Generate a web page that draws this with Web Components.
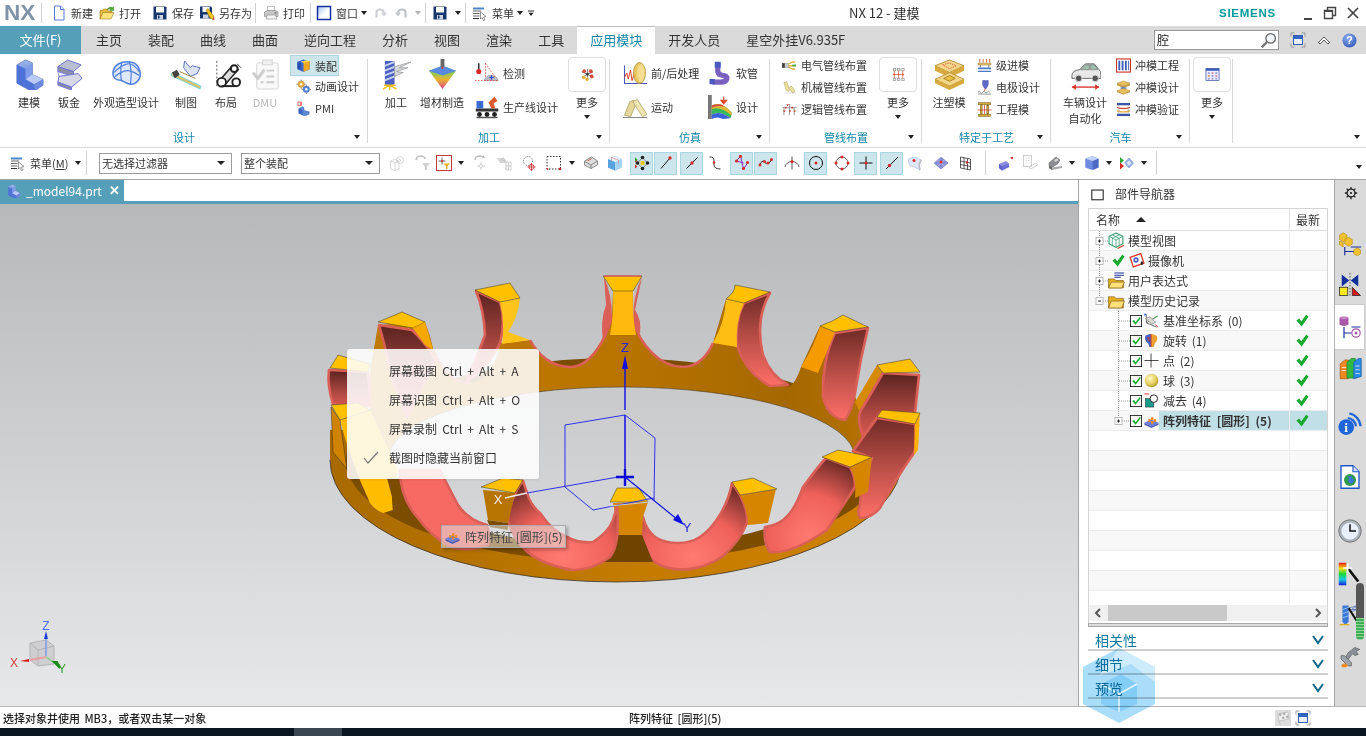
<!DOCTYPE html>
<html lang="zh">
<head>
<meta charset="utf-8">
<title>NX 12 - 建模</title>
<style>
  html, body { margin: 0; height: 100%; overflow: hidden; background: #fff; }
  body { font: 11px/16px "Noto Sans CJK SC", "Liberation Sans", sans-serif; color: #333; }
</style>
</head>
<body>
<nx-app>
  <nx-titlebar>
    <nx-tb ico="new" style="margin-left:9px">新建</nx-tb>
    <nx-tb ico="open" style="margin-left:6px">打开</nx-tb>
    <nx-tb ico="save" style="margin-left:11px">保存</nx-tb>
    <nx-tb ico="saveas" style="margin-left:5px">另存为</nx-tb>
    <nx-sep style="margin:0 7px 0 3px"></nx-sep>
    <nx-tb ico="print">打印</nx-tb>
    <nx-sep style="margin:0 5px 0 5px"></nx-sep>
    <nx-tb ico="win">窗口</nx-tb>
    <nx-caret style="margin-left:3px"></nx-caret>
    <nx-ico n="redo" s="14" style="margin-left:6px"></nx-ico>
    <nx-ico n="undo" s="14" style="margin-left:8px"></nx-ico>
    <nx-caret style="margin-left:6px;opacity:.35"></nx-caret>
    <nx-sep style="margin:0 6px 0 4px"></nx-sep>
    <nx-ico n="save" s="16"></nx-ico>
    <nx-caret style="margin-left:7px"></nx-caret>
    <nx-sep style="margin:0 6px 0 4px"></nx-sep>
    <nx-tb ico="menu">菜单</nx-tb>
    <nx-caret style="margin-left:3px"></nx-caret>
    <nx-ico n="dropline" s="8" style="margin-left:4px"></nx-ico>
  </nx-titlebar>

  <nx-tabs>
    <nx-tab>主页</nx-tab><nx-tab>装配</nx-tab><nx-tab>曲线</nx-tab><nx-tab>曲面</nx-tab><nx-tab>逆向工程</nx-tab>
    <nx-tab>分析</nx-tab><nx-tab>视图</nx-tab><nx-tab>渲染</nx-tab><nx-tab>工具</nx-tab><nx-tab active>应用模块</nx-tab>
    <nx-tab>开发人员</nx-tab><nx-tab>星空外挂V6.935F</nx-tab>
  </nx-tabs>

  <nx-ribbon>
    <rb-group label="设计" w="368" pad="8">
      <rb-big ico="model" w="42">建模</rb-big>
      <rb-big ico="sheet" w="38">钣金</rb-big>
      <rb-big ico="shape" w="76">外观造型设计</rb-big>
      <rb-big ico="draft" w="44">制图</rb-big>
      <rb-big ico="layout" w="36">布局</rb-big>
      <rb-big ico="dmu" w="42" dim>DMU</rb-big>
      <rb-col style="margin-left:4px">
        <rb-small ico="asm" hl>装配</rb-small>
        <rb-small ico="anim">动画设计</rb-small>
        <rb-small ico="pmi">PMI</rb-small>
      </rb-col>
    </rb-group>
    <rb-group label="加工" w="242" pad="8">
      <rb-big ico="cam" w="40">加工</rb-big>
      <rb-big ico="am" w="52">增材制造</rb-big>
      <rb-col tall w="93" style="margin-left:7px">
        <rb-small ico="inspect" big>检测</rb-small>
        <rb-small ico="line" big>生产线设计</rb-small>
      </rb-col>
      <rb-more ico="moremfg">更多</rb-more>
    </rb-group>
    <rb-group label="仿真" w="160" pad="13">
      <rb-col tall w="85">
        <rb-small ico="pre" big>前/后处理</rb-small>
        <rb-small ico="motion" big>运动</rb-small>
      </rb-col>
      <rb-col tall w="60">
        <rb-small ico="hose" big>软管</rb-small>
        <rb-small ico="flow" big>设计</rb-small>
      </rb-col>
    </rb-group>
    <rb-group label="管线布置" w="152" pad="6">
      <rb-col w="103">
        <rb-small ico="elec">电气管线布置</rb-small>
        <rb-small ico="mech">机械管线布置</rb-small>
        <rb-small ico="logic">逻辑管线布置</rb-small>
      </rb-col>
      <rb-more ico="morert">更多</rb-more>
    </rb-group>
    <rb-group label="特定于工艺" w="129" pad="5">
      <rb-big ico="mold" w="44">注塑模</rb-big>
      <rb-col>
        <rb-small ico="prog">级进模</rb-small>
        <rb-small ico="electrode">电极设计</rb-small>
        <rb-small ico="eng">工程模</rb-small>
      </rb-col>
    </rb-group>
    <rb-group label="汽车" w="139" pad="9">
      <rb-big ico="car" w="50">车辆设计<br>自动化</rb-big>
      <rb-col>
        <rb-small ico="die1">冲模工程</rb-small>
        <rb-small ico="die2">冲模设计</rb-small>
        <rb-small ico="die3">冲模验证</rb-small>
      </rb-col>
    </rb-group>
    <rb-group w="43" pad="3" plain>
      <rb-more ico="moreauto">更多</rb-more>
    </rb-group>
  </nx-ribbon>

  <nx-selbar>
    <nx-ico n="menu" s="16" style="margin-left:10px"></nx-ico>
    <span style="margin-left:4px;width:40px;white-space:nowrap">菜单(<u>M</u>)</span>
    <nx-caret style="margin-left:4.5px"></nx-caret>
    <nx-sep style="margin:0 12px 0 5.5px;height:24px"></nx-sep>
    <sel-drop w="133">无选择过滤器</sel-drop>
    <sel-drop w="139" style="margin-left:9px">整个装配</sel-drop>
    <sel-btn n="f1" style="margin-left:5.5px"></sel-btn>
    <sel-btn n="f2" style="margin-left:3px"></sel-btn>
    <sel-btn n="f3" style="margin-left:-2px"></sel-btn>
    <nx-caret style="margin-left:2px"></nx-caret>
    <sel-btn n="f4" style="margin-left:6px"></sel-btn>
    <sel-btn n="f5"></sel-btn>
    <sel-btn n="f6" style="margin-left:2px"></sel-btn>
    <sel-btn n="f7" style="margin-left:2px"></sel-btn>
    <nx-caret style="margin-left:3px"></nx-caret>
    <sel-btn n="f8" style="margin-left:5px"></sel-btn>
    <sel-btn n="f9" style="margin-left:1px"></sel-btn>
    <sel-btn n="s1" hl style="margin-left:3.5px"></sel-btn>
    <sel-btn n="s2" hl style="margin-left:1px"></sel-btn>
    <sel-btn n="s3" hl style="margin-left:3px"></sel-btn>
    <sel-btn n="s4" style="margin-left:.5px"></sel-btn>
    <sel-btn n="s5" hl style="margin-left:3.5px"></sel-btn>
    <sel-btn n="s6" hl style="margin-left:1px"></sel-btn>
    <sel-btn n="s7" style="margin-left:3.5px"></sel-btn>
    <sel-btn n="s8" hl style="margin-left:.5px"></sel-btn>
    <sel-btn n="s9" style="margin-left:3.5px"></sel-btn>
    <sel-btn n="s10" hl style="margin-left:.5px"></sel-btn>
    <sel-btn n="s11" hl style="margin-left:3px"></sel-btn>
    <sel-btn n="s12" style="margin-left:.5px"></sel-btn>
    <sel-btn n="s13" style="margin-left:3px"></sel-btn>
    <sel-btn n="s14" style="margin-left:2px"></sel-btn>
    <nx-sep style="margin:0 8.5px 0 7.5px;height:24px"></nx-sep>
    <sel-btn n="t1"></sel-btn>
    <sel-btn n="t2" style="margin-left:1px"></sel-btn>
    <sel-btn n="t3" style="margin-left:2px"></sel-btn>
    <nx-caret style="margin-left:2px"></nx-caret>
    <sel-btn n="t4" style="margin-left:6px"></sel-btn>
    <nx-caret style="margin-left:2px"></nx-caret>
    <sel-btn n="t5" style="margin-left:3px"></sel-btn>
    <nx-caret style="margin-left:3px"></nx-caret>
    <nx-sep style="margin:0 0 0 9.5px;height:24px"></nx-sep>
    <nx-caret style="margin-left:auto;margin-right:4px;margin-top:8px"></nx-caret>
  </nx-selbar>

  <nx-main>
    <nx-work>
      <nx-doctab>_model94.prt</nx-doctab>
      <nx-viewport>
        <nx-popup>
          <pop-item>屏幕截图 Ctrl + Alt + A</pop-item>
          <pop-item>屏幕识图 Ctrl + Alt + O</pop-item>
          <pop-item>屏幕录制 Ctrl + Alt + S</pop-item>
          <pop-item checked>截图时隐藏当前窗口</pop-item>
        </nx-popup>
        <nx-tip>阵列特征 [圆形](5)</nx-tip>
      </nx-viewport>
    </nx-work>
    <nx-panel>
      <nx-tree>
        <tree-row kind="root" exp="+" ico="tview">模型视图</tree-row>
        <tree-row kind="root" exp="+" ico="tcam" tick>摄像机</tree-row>
        <tree-row kind="root" exp="+" ico="texpr">用户表达式</tree-row>
        <tree-row kind="root" exp="-" ico="topen" endroot>模型历史记录</tree-row>
        <tree-row kind="child" ico="tdatum" ok>基准坐标系 (0)</tree-row>
        <tree-row kind="child" ico="trev" ok>旋转 (1)</tree-row>
        <tree-row kind="child" ico="tpoint" ok>点 (2)</tree-row>
        <tree-row kind="child" ico="tsphere" ok>球 (3)</tree-row>
        <tree-row kind="child" ico="tsub" ok>减去 (4)</tree-row>
        <tree-row kind="child" ico="tpat" ok sel exp="+">阵列特征 [圆形] (5)</tree-row>
        <tree-row></tree-row><tree-row></tree-row><tree-row></tree-row><tree-row></tree-row><tree-row></tree-row>
        <tree-row></tree-row><tree-row></tree-row><tree-row></tree-row><tree-row></tree-row>
      </nx-tree>
      <acc-item>相关性</acc-item>
      <acc-item>细节</acc-item>
      <acc-item>预览</acc-item>
    </nx-panel>
    <nx-rail>
      <rail-item n="gear" s="14" h="26" style="margin-left:2px"></rail-item>
      <rail-item n="r_asm" s="24" h="40" style="margin-top:18px"></rail-item>
      <rail-item n="r_con" s="24" h="40" style="margin-top:1px"></rail-item>
      <rail-item n="r_part" s="24" h="44" active></rail-item>
      <rail-item n="r_book" s="24" h="40"></rail-item>
      <rail-item n="r_info" s="24" h="40" style="margin-top:15px"></rail-item>
      <rail-item n="r_web" s="24" h="40" style="margin-top:13px"></rail-item>
      <rail-item n="r_clock" s="24" h="40" style="margin-top:14px"></rail-item>
      <rail-item n="r_role" s="24" h="40" style="margin-top:3px"></rail-item>
      <rail-item n="r_hole" s="22" h="40" style="margin-top:1px"></rail-item>
      <rail-item n="r_tool" s="22" h="40" style="margin-top:2px"></rail-item>
      <rail-pill></rail-pill>
    </nx-rail>
  </nx-main>

  <nx-status msg="选择对象并使用 MB3&#xFF0C;或者双击某一对象" sel="阵列特征 [圆形](5)"></nx-status>
  <nx-taskbar></nx-taskbar>
  <nx-mark></nx-mark>
</nx-app>

<script>
// ICONS, all on a 32x32 grid
const ICONS = {
  new: `<path d="M7 2h12l7 7v21H7z" fill="#fff" stroke="#5a78d8" stroke-width="2"/><path d="M19 2v7h7" fill="#dde5fb" stroke="#5a78d8" stroke-width="2"/>`,
  open: `<path d="M2 11h5l2-3h9v4h8v4H8L2 28z" fill="#e8b93a" stroke="#8a6a12"/><path d="M2 28l6-13h22l-6 13z" fill="#ffe27a" stroke="#8a6a12"/><path d="M16 9q5-7 11-4l2-2 1 8-8 0 2-2q-4-2-8 0z" fill="#4fae3a" stroke="#2c7a22" stroke-width=".7"/>`,
  save: `<path d="M3 3h24l2 2v24H3z" fill="#17376f"/><rect x="8" y="4" width="16" height="11" fill="#fff"/><rect x="10" y="20" width="12" height="9" fill="#c9d1e2"/><rect x="12" y="21" width="3" height="6" fill="#17376f"/>`,
  saveas: `<path d="M2 3h22l2 2v22H2z" fill="#17376f"/><rect x="7" y="4" width="14" height="10" fill="#fff"/><rect x="8" y="19" width="11" height="8" fill="#c9d1e2"/><path d="M14 10l4-3 12 16-3 6-5-3z" fill="#f4c518" stroke="#7c5c00" stroke-width=".8"/><path d="M27 29l3-6 1 7z" fill="#d23a2a"/>`,
  print: `<path d="M9 3h14v9H9z" fill="#fff" stroke="#888"/><path d="M3 14l5-3h17l5 3v9H3z" fill="#c8c8c8" stroke="#6b6b6b"/><path d="M8 20h17l3 8H6z" fill="#f2f2f2" stroke="#777"/><rect x="23" y="15" width="4" height="2" fill="#555"/>`,
  win: `<defs><linearGradient id="w" x1="0" y1="0" x2="1" y2="1"><stop offset="0" stop-color="#9cc0ee"/><stop offset=".55" stop-color="#fff"/></linearGradient></defs><rect x="3" y="3" width="26" height="26" fill="url(#w)" stroke="#1a2fa0" stroke-width="3"/>`,
  redo: `<path d="M8 26V15q0-7 8-7t9 7" fill="none" stroke="#ccd0d4" stroke-width="5"/><path d="M18 15h14l-7 9z" fill="#ccd0d4"/>`,
  undo: `<path d="M24 26V15q0-7-8-7t-9 7" fill="none" stroke="#c0c4c8" stroke-width="5"/><path d="M14 15H0l7 9z" fill="#c0c4c8"/>`,
  menu: `<path d="M2 5h22v4H2z" fill="#4d86c6"/><path d="M2 12h16M2 17h13M2 22h13" stroke="#666" stroke-width="2.4"/><path d="M2 27h12" stroke="#333" stroke-width="2"/><path d="M17 14l11 9-5 1 3 6-3 1-3-6-3 3z" fill="#fff" stroke="#333"/>`,
  dropline: `<path d="M4 8h24" stroke="#222" stroke-width="4"/><path d="M6 15h20L16 28z" fill="#222"/>`,
  // ribbon, large
  model: `<defs><linearGradient id="m" x1="0" y1="0" x2="0" y2="1"><stop offset="0" stop-color="#9db6ee"/><stop offset="1" stop-color="#3f5fc8"/></linearGradient></defs><path d="M3 6l9-5 7 3v12l11 5v6l-11 7L3 25z" fill="url(#m)" stroke="#8090c0"/><path d="M3 6l9 4v11l9 5v8L3 25z" fill="#4e73d8"/><path d="M12 10l7-6v12l-7 5z" fill="#7f9cec"/><path d="M12 21l7-5 11 5-9 5z" fill="#b9cbf6"/><path d="M21 26l9-5v6l-9 7z" fill="#6c8be0"/>`,
  sheet: `<path d="M4 8l10-7 14 5-8 7z" fill="#b9bed0" stroke="#6d6fd8"/><path d="M4 8l16 5v5L4 13z" fill="#8c90a6" stroke="#6d6fd8"/><path d="M4 13l16 5-8 2L5 18z" fill="#eceef6" stroke="#6d6fd8" stroke-width=".7"/><path d="M5 18l20-3 4 5-11 9-14-5z" fill="#d6d8e6" stroke="#6d6fd8"/><path d="M4 24l14 5v3L4 27z" fill="#8a8ea4" stroke="#6d6fd8"/>`,
  shape: `<path d="M2 15C2 5 12 2 20 3c8 1 11 9 10 15-1 6-6 8-9 8-5 0-7-3-11-4-4 0-8-2-8-7z" fill="#dfe8fb" stroke="#4d7fe0" stroke-width="1.6"/><path d="M3 14q8-8 14-9t12 8M4 18q8-6 13-6t12 5M11 4q-2 9 0 19M19 3q3 11 1 23" fill="none" stroke="#4d7fe0" stroke-width="1.2"/>`,
  draft: `<path d="M14 2l6 7 2-2 8 2-3 6-7 3-7-9z" fill="#dde4f6" stroke="#5c6fb8"/><path d="M1 14l30 14-1 3L0 17z" fill="#d9c36a" stroke="#7cd3d8"/><path d="M1 14l5-3 3 5-5 4z" fill="#444"/><path d="M9 13l16 7" stroke="#9a8a3a"/>`,
  layout: `<path d="M6 2v28" stroke="#555" stroke-dasharray="2 2"/><path d="M9 22L22 7l6 4-14 16z" fill="#ddd" stroke="#222" stroke-width="1.6"/><circle cx="11" cy="24" r="4.5" fill="#fff" stroke="#222" stroke-width="2"/><circle cx="24" cy="10" r="3.5" fill="#fff" stroke="#222" stroke-width="2"/><path d="M11 28h16" stroke="#222" stroke-width="2"/><circle cx="26" cy="24" r="4" fill="#fff" stroke="#222" stroke-width="2"/><path d="M27 5l4 4" stroke="#222"/>`,
  dmu: `<g opacity=".42"><rect x="7" y="4" width="22" height="27" rx="2" fill="#f1f1f1" stroke="#999"/><rect x="13" y="1" width="10" height="5" fill="#ddd" stroke="#999"/><path d="M3 14l5 6 7-9" fill="none" stroke="#8a8a8a" stroke-width="3"/><path d="M17 12h8M17 18h8M17 24h8M11 24h3" stroke="#888" stroke-width="2"/></g>`,
  cam: `<path d="M4 2h10v24l-5 3-5-3z" fill="#4a5fc0"/><path d="M4 7l10-4M4 12l10-4M4 17l10-4M4 22l10-4" stroke="#c5d2f2" stroke-width="2"/><path d="M14 8l17-5-12 6 9 0-12 4 7 1-9 4z" fill="#d6d8dc" stroke="#888" stroke-width=".6"/><path d="M9 27l-7 4M9 27l7 4M9 27v5M3 27h12" stroke="#f0c020" stroke-width="1.5"/>`,
  am: `<defs><linearGradient id="a" x1="0" y1="0" x2="0" y2="1"><stop offset="0" stop-color="#36b0c8"/><stop offset=".35" stop-color="#9ac850"/><stop offset=".6" stop-color="#f0b030"/><stop offset="1" stop-color="#d04090"/></linearGradient></defs><path d="M2 12L16 31 30 12 16 7z" fill="url(#a)"/><path d="M2 12l14-5 14 5-14 5z" fill="#5a8ae0"/><rect x="14" y="0" width="4" height="8" fill="#666"/><path d="M16 8v2" stroke="#d33" stroke-width="2"/>`,
  inspect: `<path d="M12 26a10 10 0 0 1 19 0z" fill="#b8bbc0" stroke="#7a7d82" stroke-width=".6"/><path d="M0 26h32" stroke="#d33" stroke-dasharray="2 2"/><path d="M5 3v10" stroke="#333" stroke-width="2"/><circle cx="5" cy="14" r="3.4" fill="#d82a2a"/><path d="M14 3l13 19M14 3v19" stroke="#d33" stroke-dasharray="2 2"/><path d="M19 22h6M22 19v6" stroke="#2c44d8" stroke-width="1.5"/>`,
  line: `<rect x="1" y="18" width="30" height="4" fill="#333"/><rect x="2" y="8" width="9" height="10" fill="#3c6bd0"/><path d="M22 18l-4-8 8-8 4 6-5 3 2 7z" fill="#d85a2a"/><circle cx="6" cy="26" r="3.2" fill="#222"/><circle cx="16" cy="26" r="3.2" fill="#222"/><circle cx="26" cy="26" r="3.2" fill="#222"/><path d="M2 30h28" stroke="#555" stroke-width="2"/>`,
  moremfg: `<path d="M16 4v24M4 10l24 12M28 10L4 22" stroke="#333" stroke-width="1.3"/><circle cx="9" cy="9" r="4" fill="#d84a3a"/><circle cx="23" cy="9" r="4" fill="#d84a3a"/><circle cx="25" cy="20" r="4" fill="#d84a3a"/><circle cx="8" cy="22" r="4" fill="#e8b040"/><circle cx="15" cy="26" r="3.6" fill="#e8b040"/><circle cx="16" cy="15" r="3" fill="#333"/>`,
  pre: `<path d="M2 6v24h30" fill="none" stroke="#4a56b8" stroke-width="1.4"/><path d="M2 22l3-6 2 8 3-12 2 14 3-9 2 7" fill="none" stroke="#d8402a" stroke-width="1.3"/><ellipse cx="22" cy="16" rx="8" ry="14" fill="#e8c860" stroke="#a8883a"/><ellipse cx="24" cy="16" rx="5" ry="12" fill="#f4dd90"/>`,
  motion: `<path d="M2 27l7-18 5-2 4 3L10 29z" fill="#e4d79a" stroke="#a89a5a"/><path d="M13 9l6-3 13 20-6 3z" fill="#efe5b2" stroke="#a89a5a"/><path d="M0 30h32" stroke="#888" stroke-width="1.4"/>`,
  hose: `<path d="M13 3v10q0 5 6 6 7 0 6 5-1 4-8 4H6" fill="none" stroke="#7a60c0" stroke-width="7"/><rect x="9" y="1" width="8" height="8" fill="#4a5ac0"/><rect x="2" y="24" width="7" height="7" fill="#4a5ac0"/>`,
  flow: `<rect x="0" y="0" width="5" height="32" fill="#777"/><path d="M5 14q14-6 27 10l-2 7Q16 20 5 26z" fill="#38b85a"/><path d="M5 14q14-6 27 10l-1 3Q16 14 5 19z" fill="#e0b83a"/><path d="M5 26q11-6 25 5l-10 1Q12 28 5 32z" fill="#3a62d8"/><path d="M5 14q8-3 14-1l3 3Q12 13 5 17z" fill="#d84a3a"/><path d="M21 2v7M17 7l4 5 4-5z" fill="#e04a2a" stroke="#e04a2a" stroke-width="1.4"/>`,
  elec: `<rect x="0" y="11" width="14" height="10" fill="#444"/><rect x="6" y="11" width="8" height="10" fill="#ccc"/><path d="M14 11l8-4h6v3h-6l-8 4zM14 15h14v3H14zM14 18l8 4h6v3h-6l-8-4z" fill="#e0b040"/><path d="M22 14h8v4h-8z" fill="#48a848"/>`,
  mech: `<path d="M4 6l6-3 5 15 3-5 4 2 6 9-5 4-6-8-3 5-5-3z" fill="#ecdfa2" stroke="#a8984e"/><path d="M4 28h26" stroke="#bbb"/>`,
  logic: `<path d="M1 12h30M16 4v8M4 12v16M16 12v16M26 12v16" stroke="#555" stroke-width="1.2"/><path d="M9 5l3 4 3-4zM2 18l3 4 3-4zM14 18l3 4 3-4zM24 18l3 4 3-4z" fill="#c8342a"/><circle cx="8" cy="12" r="2" fill="#c8342a"/><circle cx="22" cy="12" r="2" fill="#c8342a"/>`,
  morert: `<g fill="none" stroke="#999" stroke-width="1.6"><rect x="5" y="3" width="5" height="5"/><rect x="14" y="3" width="5" height="5"/><rect x="23" y="3" width="5" height="5"/><rect x="5" y="24" width="5" height="5"/><rect x="14" y="24" width="5" height="5"/><rect x="23" y="24" width="5" height="5"/></g><path d="M7 8v16M16 8v16M25 8v16M4 16h24" stroke="#d8503a" stroke-width="1.4"/><circle cx="7" cy="16" r="2" fill="#d8503a"/><circle cx="16" cy="16" r="2" fill="#d8503a"/><circle cx="25" cy="16" r="2" fill="#d8503a"/>`,
  mold: `<path d="M1 7L16 1l15 6-15 7z" fill="#f4d68a" stroke="#b89438"/><path d="M1 7v5l15 7 15-7V7L16 14z" fill="#d8a93c"/><path d="M9 6l7-2 7 3-7 3z" fill="none" stroke="#d8604a" stroke-dasharray="1.5 1"/><path d="M1 21l15-7 15 7-15 7z" fill="#f4d68a" stroke="#b89438"/><path d="M1 21v4l15 7 15-7v-4l-15 7z" fill="#d8a93c"/><path d="M10 20l6-3 6 3-6 3z" fill="#e8c040" stroke="#a88428"/>`,
  prog: `<path d="M6 2v8M13 2v8M20 2v8M27 2v8" stroke="#d8603a" stroke-width="2"/><path d="M2 11h28v4H2z" fill="#e8c060" stroke="#8a7a3a"/><path d="M2 20h28v4H2zM2 27h28v3H2z" fill="#4a78c8"/><path d="M7 15v5M25 15v5" stroke="#666" stroke-width="2"/>`,
  electrode: `<path d="M12 1h12v9l-4 8h-4l-4-8z" fill="#6068c8" stroke="#404a98"/><path d="M18 18l-2 5" stroke="#d84a2a" stroke-width="2"/><path d="M2 26q3-4 5 0t5 0 5 0 5 0 5 0M2 30h28" fill="none" stroke="#777" stroke-width="1.6"/>`,
  eng: `<rect x="3" y="1" width="26" height="5" fill="#d8a93c" stroke="#6b5a1e"/><rect x="3" y="26" width="26" height="5" fill="#d8a93c" stroke="#6b5a1e"/><rect x="7" y="6" width="4" height="20" fill="#c8a040" stroke="#6b5a1e"/><rect x="21" y="6" width="4" height="20" fill="#c8a040" stroke="#6b5a1e"/><path d="M1 17h30M16 6v20" stroke="#d8342a" stroke-width="1.6"/>`,
  car: `<path d="M2 17q0-5 8-6l6-6h9l5 6q2 1 2 6v3H2z" fill="#e8e8e8" stroke="#666"/><path d="M11 11l5-5h4v5zM21 6h4l4 5h-8z" fill="#9fbfb0" stroke="#666" stroke-width=".6"/><circle cx="9" cy="20" r="3.4" fill="#555" stroke="#ddd"/><circle cx="26" cy="20" r="3.4" fill="#555" stroke="#ddd"/><path d="M2 29h28" stroke="#d8342a" stroke-width="1.4"/><path d="M6 26l-4 3 4 3zM26 26l4 3-4 3z" fill="#d8342a"/>`,
  die1: `<rect x="1" y="2" width="30" height="28" fill="#fff" stroke="#c8342a" stroke-width="2.4"/><path d="M5 6h4v20H5zM12 6h4v20h-4zM19 6h4v20h-4z" fill="#3f5fb8"/><path d="M26 6h2v20h-2z" fill="#3f5fb8"/>`,
  die2: `<path d="M2 7l14-5 14 5-14 6z" fill="#e8c060" stroke="#a88428"/><path d="M2 7v4l14 6 14-6V7l-14 6z" fill="#c89a3a"/><path d="M8 17l8-3 8 3-8 4z" fill="#6a86c8"/><path d="M2 23l14-5 14 5-14 7z" fill="#e8c060" stroke="#a88428"/><path d="M2 23v3l14 5 14-5v-3l-14 7z" fill="#c89a3a"/>`,
  die3: `<rect x="2" y="2" width="28" height="5" fill="#3a54a8"/><rect x="2" y="25" width="28" height="5" fill="#3a54a8"/><path d="M2 10q14 5 28 0v3q-14 5-28 0z" fill="#d84a3a"/><path d="M2 17q14 5 28 0v3q-14 5-28 0z" fill="#e8b040"/><path d="M6 7v18M26 7v18" stroke="#888"/>`,
  moreauto: `<rect x="2" y="3" width="28" height="26" fill="#eef" stroke="#4a5aa8" stroke-width="1.6"/><rect x="2" y="3" width="28" height="5" fill="#3a5ab8"/><g fill="#a0a0d8"><rect x="6" y="11" width="4" height="4"/><rect x="14" y="11" width="4" height="4" fill="#d88aa0"/><rect x="22" y="11" width="4" height="4"/><rect x="6" y="17" width="4" height="4" fill="#d8a070"/><rect x="14" y="17" width="4" height="4"/><rect x="22" y="17" width="4" height="4" fill="#d88aa0"/><rect x="6" y="23" width="4" height="4"/><rect x="14" y="23" width="4" height="4"/><rect x="22" y="23" width="4" height="4"/></g>`,
  // ribbon, small
  asm: `<path d="M3 8l13-5 13 5v16l-13 6-13-6z" fill="#3a66d0"/><path d="M16 9l13-3v18l-13 6z" fill="#f2a81e"/><path d="M10 8l12-3 7 2-12 4z" fill="#ffd050"/><path d="M3 8l7 3v15l-7-3z" fill="#2a4ea8"/>`,
  anim: `<circle cx="11" cy="11" r="7" fill="#e8b040" stroke="#a87820"/><circle cx="11" cy="11" r="2.6" fill="#fff"/><circle cx="22" cy="22" r="7" fill="#5a86d8" stroke="#3a5ab0"/><circle cx="22" cy="22" r="2.6" fill="#fff"/><path d="M11 1v3M11 18v3M1 11h3M18 11h3M22 12v3M22 29v3M12 22h3M29 22h3" stroke="#888" stroke-width="2"/>`,
  pmi: `<path d="M6 16l8-4 3 2v6l11 3v5l-10 4-12-6z" fill="#5a8ad8" stroke="#3a5fb0"/><path d="M6 16l8 4v10l-8-4z" fill="#3a66c0"/><path d="M4 2h6v8H4z" fill="none" stroke="#d8342a" stroke-width="1.5"/><path d="M12 2v8" stroke="#d8342a" stroke-width="1.5"/>`,
  search: `<circle cx="20" cy="12" r="9" fill="#f3f6f8" stroke="#666" stroke-width="2.4"/><path d="M13 19L3 29" stroke="#777" stroke-width="4.5"/>`,
  maximize: `<path d="M2 9V2h7M23 2h7v7M30 23v7h-7M9 30H2v-7" fill="none" stroke="#888" stroke-width="1.6"/><rect x="7" y="7" width="18" height="18" fill="#eaf0fa" stroke="#1f4fa8" stroke-width="1.8"/><rect x="8" y="8" width="16" height="6" fill="#2f66c4"/>`,
  up: `<path d="M3 22L16 9l13 13-4 3-9-9-9 9z" fill="#fff" stroke="#333" stroke-width="1.8"/>`,
  help: `<defs><radialGradient id="h" cx=".4" cy=".3" r=".8"><stop offset="0" stop-color="#8fb0f0"/><stop offset="1" stop-color="#2c54b8"/></radialGradient></defs><circle cx="16" cy="16" r="15" fill="url(#h)"/><text x="16" y="24" text-anchor="middle" font-size="23" font-weight="700" fill="#fff" font-family="Liberation Sans">?</text>`,
  // selection bar
  f1: `<g opacity=".5" fill="none" stroke="#666"><path d="M3 12v16l9 3V15zM12 15l8-3v16l-8 3M3 12l8-3 9 3"/><circle cx="22" cy="10" r="7"/><path d="M19 6l6 8"/></g>`,
  f2: `<g opacity=".45"><path d="M14 16h16l-6 7v7h-4v-7z" fill="#999"/><path d="M2 10q1-8 9-8t9 6" fill="none" stroke="#777" stroke-width="3"/><path d="M2 10l4-2M20 8l3-4" stroke="#777"/></g>`,
  f3: `<rect x="1" y="1" width="30" height="30" fill="#fff" stroke="#c03a3a" stroke-width="2"/><path d="M12 5v14M5 12h14" stroke="#333" stroke-width="1.5"/><circle cx="12" cy="12" r="2" fill="#d82a2a"/><path d="M15 17h13l-5 5v6h-3v-6z" fill="#e8a820"/>`,
  f4: `<g opacity=".5"><path d="M4 10q0-8 10-8l6 2" fill="none" stroke="#777" stroke-width="2.6"/><path d="M20 0l4 5-6 2z" fill="#777"/><path d="M16 14v16M8 22h16" stroke="#888" stroke-width="1.6"/><circle cx="16" cy="22" r="3" fill="#fff" stroke="#777"/></g>`,
  f5: `<g opacity=".5"><path d="M2 6h14l4 4v6H8z" fill="#aaa"/><path d="M16 4l-5 5 8 3" stroke="#777" fill="none"/><path d="M20 14h10v16H20zM20 22h10M25 14v16" fill="none" stroke="#777" stroke-width="1.4"/></g>`,
  f6: `<circle cx="14" cy="12" r="9" fill="none" stroke="#555" stroke-width="1.6" stroke-dasharray="2 2"/><path d="M21 16v16M13 24h16" stroke="#c82a2a" stroke-width="1.6"/><circle cx="21" cy="24" r="5" fill="none" stroke="#c82a2a" stroke-width="1.6"/>`,
  f7: `<rect x="2" y="3" width="27" height="25" fill="none" stroke="#333" stroke-width="2" stroke-dasharray="3 3"/><circle cx="28" cy="28" r="2.6" fill="#c82a2a"/><circle cx="3" cy="28" r="2" fill="#c82a2a"/>`,
  f8: `<path d="M3 12L17 4l12 8v8l-13 7-13-7z" fill="#ddd" stroke="#666" stroke-width="1.4"/><path d="M3 13l13 7 13-8M16 20v7" fill="none" stroke="#666" stroke-width="1.4"/><path d="M9 12l8-5" stroke="#d8503a" stroke-width="2"/>`,
  f9: `<path d="M2 8l14-6 14 6v17l-14 6-14-6z" fill="#8cc0ec"/><path d="M2 8l14 6v17l-14-6z" fill="#58a2e0"/><path d="M16 14l14-6v17l-14 6z" fill="#a8d4f4"/><path d="M2 8l14-6 14 6-14 6z" fill="#e4f0fa"/><path d="M9 12V5l14 5v8" fill="none" stroke="#d86a6a"/>`,
  s1: `<path d="M2 7l5 4-5 4zM2 19l5 4-5 4z" fill="#d82a2a"/><path d="M2 5l5 4-5 4z" fill="#28a828"/><circle cx="17" cy="16" r="4.5" fill="#e8c820"/><circle cx="17" cy="5" r="3.6" fill="#222"/><circle cx="17" cy="27" r="3.6" fill="#222"/><circle cx="7" cy="16" r="3.6" fill="#222"/><circle cx="27" cy="16" r="3.6" fill="#222"/><path d="M17 5L7 16l10 11 10-11z" fill="none" stroke="#222"/>`,
  s2: `<path d="M6 27L24 6" stroke="#111" stroke-width="2"/><circle cx="24" cy="6" r="3.4" fill="#d82a2a"/>`,
  s3: `<path d="M5 27L27 5" stroke="#111" stroke-width="2"/><circle cx="16" cy="16" r="3.4" fill="#d82a2a"/>`,
  s4: `<path d="M5 4q9-1 9 7v9q0 8 13 8" fill="none" stroke="#222" stroke-width="1.8"/><circle cx="14" cy="15" r="2.4" fill="#d82a2a"/>`,
  s5: `<path d="M5 12L13 2l6 26 8-12M5 12l14 4" fill="none" stroke="#8a2ab8" stroke-width="2"/><circle cx="5" cy="12" r="3.2" fill="#d82a2a"/><circle cx="13" cy="3" r="3.2" fill="#d82a2a"/><circle cx="19" cy="27" r="3.2" fill="#d82a2a"/><circle cx="27" cy="15" r="3.2" fill="#d82a2a"/>`,
  s6: `<path d="M3 20q5-12 11-5t14-7" fill="none" stroke="#222" stroke-width="2"/><circle cx="4" cy="20" r="3" fill="#d82a2a"/><circle cx="13" cy="13" r="3" fill="#d82a2a"/><circle cx="20" cy="16" r="3" fill="#d82a2a"/><circle cx="27" cy="9" r="3" fill="#d82a2a"/>`,
  s7: `<path d="M16 3v26" stroke="#222" stroke-width="1.5"/><path d="M2 24q3-11 14-11t14 11" fill="none" stroke="#222" stroke-width="1.5"/><circle cx="16" cy="13" r="3" fill="#d82a2a"/>`,
  s8: `<circle cx="16" cy="16" r="13" fill="none" stroke="#111" stroke-width="2"/><circle cx="16" cy="16" r="3" fill="#d82a2a"/>`,
  s9: `<circle cx="16" cy="16" r="12" fill="none" stroke="#444" stroke-width="1.6"/><g fill="#d82a2a"><circle cx="16" cy="4" r="3"/><circle cx="16" cy="28" r="3"/><circle cx="4" cy="16" r="3"/><circle cx="28" cy="16" r="3"/></g>`,
  s10: `<path d="M16 3v26M3 16h26" stroke="#111" stroke-width="2"/><circle cx="16" cy="16" r="3" fill="#d82a2a"/>`,
  s11: `<path d="M4 28L28 4" stroke="#111" stroke-width="2"/><circle cx="11" cy="21" r="3.4" fill="#d82a2a"/>`,
  s12: `<path d="M3 8q12-8 26 2-6 8-3 20Q14 22 6 22q-4-6-3-14z" fill="#dbe8fb" stroke="#a0b0d8"/><path d="M26 30q-4-14 3-20" fill="none" stroke="#bbb" stroke-width="3"/><circle cx="14" cy="11" r="3" fill="#d82a2a"/>`,
  s13: `<path d="M2 16L16 4l14 12-14 12z" fill="#8a90d8" stroke="#5a60b0"/><path d="M9 10l14 12M16 4L2 16M23 10L9 22" stroke="#dfe0f4"/><circle cx="16" cy="14" r="3" fill="#d82a2a"/>`,
  s14: `<path d="M5 4l20 4v22L5 26z" fill="#fff" stroke="#333" stroke-width="1.6"/><path d="M12 5v22M19 7v22M5 12l20 4M5 19l20 4" stroke="#333" stroke-width="1.6"/><circle cx="18" cy="15" r="2.4" fill="#d82a2a"/>`,
  t1: `<path d="M2 18l14-6 6 5v7l-14 7-6-5z" fill="#8a8ee0"/><path d="M2 18l6 5v8l-6-5z" fill="#5c60c8"/><path d="M8 23l14-6v7L8 31z" fill="#6a70d4"/><circle cx="28" cy="6" r="2.4" fill="#d83a3a"/><path d="M24 4l4 4" stroke="#d83a3a"/>`,
  t2: `<g opacity=".5" fill="none" stroke="#888" stroke-width="1.6"><rect x="3" y="1" width="16" height="22"/><path d="M7 6h2M12 6h3M7 11h2M12 11h3M7 16h2"/><path d="M14 24l14-8 3 4-14 8z"/></g>`,
  t3: `<path d="M4 16L18 4l8 6-4 7-12 8-6-4z" fill="#8c8f94" stroke="#555"/><path d="M4 21l6 4v5l-6-4z" fill="#666"/><path d="M10 25l20-3v4l-20 4z" fill="#aaa"/><path d="M14 10l6-3 3 3-6 4z" fill="#ddd"/>`,
  t4: `<path d="M3 7l14-5 12 5v18l-12 5-14-5z" fill="#7f9de8"/><path d="M3 7l14 5v18L3 25z" fill="#6e8ce0"/><path d="M17 12l12-5v18l-12 5z" fill="#4a68c4"/><path d="M3 7l14-5 12 5-12 5z" fill="#c2d2f6"/>`,
  t5: `<path d="M4 4l8 7-8 7z" fill="#2ea83a"/><path d="M4 15l8 7-8 7z" fill="#d82a2a"/><path d="M13 16l9-10 9 10-9 10z" fill="#9ab0e8" stroke="#6a80c0"/><path d="M17 16l5-5 5 5-5 5z" fill="#dfe6f6"/>`,
  // navigator
  frame: `<rect x="2" y="5" width="28" height="24" fill="#fff" stroke="#222" stroke-width="2.6"/>`,
  tview: `<path d="M15 2l13 6v14l-13 7-13-7V8z" fill="none" stroke="#2a9a6a" stroke-width="2"/><path d="M2 8l13 7 13-7M15 15v14M8 5l13 7v14M22 5L8 12v14" fill="none" stroke="#2a9a6a" stroke-width="1.4"/><path d="M18 31l12-6" stroke="#d8402a" stroke-width="2.4"/>`,
  tcam: `<path d="M4 10L24 3l6 18-20 7z" fill="#fff" stroke="#d8342a" stroke-width="2.4"/><circle cx="15" cy="15" r="5" fill="#4a5ac0"/><circle cx="15" cy="15" r="2" fill="#fff"/><path d="M24 18h4v6h-4z" fill="#222"/>`,
  texpr: `<path d="M12 2h18M12 6h18M12 10h12" stroke="#1f2f98" stroke-width="2"/><path d="M1 13h11l3 3h14v14H1z" fill="#e8b020" stroke="#7a5a10" stroke-width="1.2"/><path d="M1 30l5-11h25l-5 11z" fill="#ffdf7a" stroke="#7a5a10" stroke-width="1.2"/>`,
  topen: `<path d="M1 9h11l3 3h14v18H1z" fill="#e8b020" stroke="#7a5a10" stroke-width="1.2"/><path d="M1 30l5-13h25l-5 13z" fill="#ffdf7a" stroke="#7a5a10" stroke-width="1.2"/>`,
  tdatum: `<path d="M5 3v18L27 30M5 21l22-13" fill="none" stroke="#333" stroke-width="1.5"/><path d="M3 12l14 12 8-4-12-12z" fill="#d8d8d0" stroke="#555"/><path d="M2 1v6M1 3h4" stroke="#2a44d8" stroke-width="1.6"/><path d="M24 25l6 5" stroke="#d83a2a" stroke-width="2"/><path d="M22 10l8-4" stroke="#38a838" stroke-width="2"/>`,
  trev: `<path d="M3 6q12-8 24 0 4 10-4 16l-2 8h-9l-3-8Q0 16 3 6z" fill="#f0a030"/><path d="M3 6q6-4 12-4v28h-3l-3-8Q0 16 3 6z" fill="#3a66d0"/><path d="M15 2v28" stroke="#d8342a" stroke-width="2"/><path d="M6 8l6 0v10H8z" fill="#c8342a" opacity=".6"/>`,
  tpoint: `<path d="M15 1v30M1 16h30" stroke="#111" stroke-width="1.6"/>`,
  tsphere: `<defs><radialGradient id="sp" cx=".4" cy=".35" r=".7"><stop offset="0" stop-color="#fff8c8"/><stop offset=".6" stop-color="#e8d060"/><stop offset="1" stop-color="#a89020"/></radialGradient></defs><circle cx="16" cy="16" r="14.5" fill="url(#sp)"/>`,
  tsub: `<rect x="3" y="12" width="18" height="18" fill="#1a9a8a" stroke="#222"/><circle cx="21" cy="12" r="8" fill="#fff" stroke="#222" stroke-width="2"/><path d="M1 2h10" stroke="#d82a2a" stroke-width="2"/>`,
  tpat: `<path d="M1 21L15 14l16 7-15 8z" fill="#6a7ed8"/><path d="M1 21l15 8v3L1 25zM16 29l15-8v4l-15 7z" fill="#4a5cb8"/><g fill="#f08a20"><rect x="9" y="13" width="5" height="6"/><rect x="15" y="9" width="5" height="6"/><rect x="21" y="13" width="5" height="6"/><rect x="15" y="17" width="5" height="6"/></g>`,
  check: `<path d="M1 16l7-5 5 7L25 2l6 4-17 25z" fill="#19a830"/>`,
  box: `<rect x="1" y="1" width="30" height="30" fill="#fff" stroke="#111" stroke-width="2.4"/><path d="M6 16l5-3 4 6 11-14 3 3-14 18z" fill="#19a830"/>`,
  // rail
  gear: `<circle cx="16" cy="16" r="9" fill="none" stroke="#222" stroke-width="3"/><circle cx="16" cy="16" r="2.5" fill="#222"/><path d="M16 2v5M16 25v5M2 16h5M25 16h5M6 6l3.5 3.5M22.5 22.5L26 26M26 6l-3.5 3.5M9.5 22.5L6 26" stroke="#222" stroke-width="3"/>`,
  r_asm: `<g fill="#f0c030" stroke="#b88a10" stroke-width=".8"><path d="M2 4l5-3 5 3v6l-5 3-5-3z"/><path d="M9 10l5-3 5 3v6l-5 3-5-3z"/><path d="M2 12l5 2v6l-5-3z"/><path d="M21 24l5-3 4 3v5l-4 3-5-3z"/></g><path d="M17 20h14M9 20v11M9 26h12" stroke="#1a2fa0" stroke-width="1.6" fill="none"/>`,
  r_con: `<path d="M5 2l10 8-10 8zM27 2L17 10l10 8z" fill="#12309a"/><path d="M16 0v32" stroke="#222" stroke-dasharray="2 2"/><rect x="2" y="19" width="11" height="11" fill="#f8e820" stroke="#222"/><path d="M19 19l11 11H19z" fill="#d81a1a" stroke="#222"/>`,
  r_part: `<ellipse cx="8" cy="4" rx="6" ry="2.5" fill="#c888c8"/><path d="M2 4v9q6 3 12 0V4q-6 3-12 0z" fill="#a858a8"/><path d="M18 16h12M8 16v15M8 24h10" stroke="#1a2fa0" stroke-width="1.6" fill="none"/><circle cx="24" cy="24" r="5.6" fill="#fff" stroke="#a858a8" stroke-width="1.6"/><circle cx="24" cy="24" r="2" fill="#a858a8"/>`,
  r_book: `<path d="M3 9l6-5h5v25H3z" fill="#f08a20" stroke="#a85a10"/><path d="M12 7l6-5h5v26H12z" fill="#30b840" stroke="#1a8028"/><path d="M21 7l6-5h4v24l-10 3z" fill="#2a8ae0" stroke="#1a60a8"/><path d="M5 14h6M5 18h6M23 12h6M23 17h6M23 22h6" stroke="#fff" stroke-width=".9"/>`,
  r_info: `<circle cx="11" cy="20" r="10.5" fill="#1f66d8"/><text x="11" y="27" text-anchor="middle" font-size="18" font-weight="700" fill="#fff" font-family="Liberation Serif">i</text><path d="M13 8a12 12 0 0 1 11 11M15 2a18 18 0 0 1 15 17" fill="none" stroke="#1f66d8" stroke-width="3"/>`,
  r_web: `<path d="M4 1h16l8 8v22H4z" fill="#fff" stroke="#1f56c8" stroke-width="1.8"/><path d="M20 1v8h8" fill="#cfe0fa" stroke="#1f56c8" stroke-width="1.5"/><circle cx="16" cy="20" r="8" fill="#2f9a4a"/><path d="M12 15q4 2 2 5t4 5q3-2 4-5-4-2-3-5z" fill="#3a78d8"/>`,
  r_clock: `<circle cx="16" cy="16" r="15" fill="#aab0b8" stroke="#666"/><circle cx="16" cy="16" r="11.5" fill="#e8eefa"/><path d="M16 7v9h8" fill="none" stroke="#111" stroke-width="2"/>`,
  r_role: `<defs><linearGradient id="rb" x1="0" y1="0" x2="0" y2="1"><stop offset="0" stop-color="#e81818"/><stop offset=".25" stop-color="#f8e018"/><stop offset=".5" stop-color="#18d838"/><stop offset=".75" stop-color="#18c8e8"/><stop offset="1" stop-color="#1818d8"/></linearGradient></defs><rect x="1" y="1" width="10" height="30" fill="url(#rb)"/><path d="M13 8l14 18" stroke="#111" stroke-width="3.6"/><path d="M13 2v12M7 8h12" stroke="#fff" stroke-width="2"/>`,
  r_hole: `<path d="M5 2h9v24l-5 4-4-4z" fill="#3a78d8"/><path d="M5 8l9-3M5 14l9-3M5 20l9-3" stroke="#c0d8f8"/><path d="M14 6l14-4-10 6 8 0-10 4" fill="none" stroke="#3a60c0"/><path d="M14 6l14 22" stroke="#111" stroke-width="3"/><path d="M1 30h14" stroke="#e0b020" stroke-width="2"/>`,
  r_tool: `<path d="M13 10l10-8 7 3-5 3 3 4-5 2-3-3-8 10-3-3z" fill="#8a8f98" stroke="#444" stroke-width=".8"/><path d="M3 14l5 0 10 10 0 5-5 0L3 19z" fill="#a0a4ac" stroke="#444" stroke-width=".8"/><path d="M3 28q5-5 10 0l-3 3H5z" fill="#f08a20"/>`,
  flag: `<rect x="0" y="0" width="32" height="32" fill="#ddd"/><g opacity=".55"><path d="M6 8l20-4 2 14-20 4zM8 22l3 8" fill="#fff" stroke="#777"/><path d="M8 8l4-1 1 4-4 1zM16 6l4-1 1 4-4 1zM14 14l4-1 1 4-4 1zM22 12l4-1 1 4-4 1z" fill="#777"/></g>`,
};

// HELPER

function define(name, css, markup, setup) {
  const tpl = document.createElement("template");
  tpl.innerHTML = `<style>${css}</style>${markup}`;
  customElements.define(name, class extends HTMLElement {
    constructor() {
      super();
      this.attachShadow({ mode: "open" }).appendChild(tpl.content.cloneNode(true));
    }
    connectedCallback() {
      if (setup) setup(this, this.shadowRoot);
    }
  });
}

customElements.define("nx-ico", class extends HTMLElement {
  connectedCallback() {
    if (this.shadowRoot) return;
    const s = this.getAttribute("s") || 16;
    const root = this.attachShadow({ mode: "open" });
    root.innerHTML = `<style>:host{display:inline-flex;flex:none;width:${s}px;height:${s}px}svg{display:block}</style>
      <svg width="${s}" height="${s}" viewBox="0 0 32 32">${ICONS[this.getAttribute("n")] || ""}</svg>`;
  }
});

const cjk = `"Noto Sans CJK SC", "Liberation Sans", sans-serif`;

// SHELL

define("nx-app", `:host{display:flex;flex-direction:column;position:relative;width:1366px;height:736px;overflow:hidden;font:11px/16px ${cjk};color:#333}`, `<slot></slot>`);

define("nx-sep", `:host{display:block;flex:none;width:1px;height:20px;background:#d2d2d2}`, ``);

define("nx-caret", `:host{display:block;flex:none;width:0;height:0;border:3.5px solid transparent;border-top:4px solid #222;border-bottom:0}`, ``);

define("nx-titlebar", `
  :host{display:flex;align-items:center;flex:none;height:26px;background:#fff}
  .left{display:flex;align-items:center;flex:none;width:849px;height:26px}
  .nx{flex:none;width:37px;margin-left:4px;font:700 22.5px/26px "Liberation Sans",sans-serif;color:#7f93a6}
  .title{flex:none;font-size:13px;color:#333;white-space:nowrap}
  .siemens{margin-left:auto;font:700 11.5px/26px "Liberation Sans",sans-serif;letter-spacing:.75px;color:#009a9a}
  svg{display:block;flex:none}
`, `<div class="left"><div class="nx">NX</div><nx-sep></nx-sep><slot></slot></div>
  <div class="title">NX 12 - 建模</div>
  <div class="siemens">SIEMENS</div>
  <svg width="12" height="12" viewBox="0 0 12 12" style="margin-left:26px;margin-top:4px"><path d="M2 10h8" stroke="#444" stroke-width="2"/></svg>
  <svg width="14" height="14" viewBox="0 0 14 14" style="margin-left:9px"><path d="M1.5 4.5h8v8h-8zM4.5 4V1.5h8v8H10" fill="none" stroke="#444" stroke-width="1.4"/><path d="M1 5h9" stroke="#444" stroke-width="2"/></svg>
  <svg width="14" height="14" viewBox="0 0 14 14" style="margin-left:9px;margin-right:6px"><path d="M2 2l10 10M12 2L2 12" stroke="#444" stroke-width="1.7"/></svg>`);

define("nx-tb", `:host{display:flex;align-items:center;flex:none;gap:4px;white-space:nowrap;font-size:11px}`,
  `<span id="i" style="display:flex"></span><slot></slot>`,
  (el, root) => { root.getElementById("i").innerHTML = `<nx-ico n="${el.getAttribute("ico")}" s="16"></nx-ico>`; });

define("nx-tabs", `
  :host{display:flex;align-items:stretch;flex:none;height:28px;background:#dadada;font-size:13px}
  .file{flex:none;width:81px;margin-right:2px;background:#569fb9;color:#fff;text-align:center;line-height:27px;font-size:13px}
  .tools{margin-left:auto;display:flex;align-items:center}
  .search{display:flex;align-items:center;justify-content:space-between;box-sizing:border-box;width:125px;height:20px;background:#fff;border:1px solid #9a9a9a;padding:0 1px 0 2px;font-size:12px;color:#222}
`, `<div class="file">文件(F)</div><slot></slot>
  <div class="tools">
    <div class="search">腔<nx-ico n="search" s="17"></nx-ico></div>
    <nx-ico n="maximize" s="16" style="margin-left:11px"></nx-ico>
    <nx-ico n="up" s="14" style="margin-left:11px"></nx-ico>
    <nx-ico n="help" s="15" style="margin-left:11px;margin-right:9px"></nx-ico>
  </div>`);

define("nx-tab", `
  :host{display:block;flex:none;padding:0 13px;line-height:27px;font-size:13px;color:#333;white-space:nowrap}
  :host([active]){background:#fff;color:#1686a8;margin-top:1px;line-height:26px;box-shadow:0 -1px 0 #bbb}
`, `<slot></slot>`);

// RIBBON

define("nx-ribbon", `
  :host{display:flex;flex:none;position:relative;box-sizing:border-box;height:94px;background:#fff;border-bottom:1px solid #dcdcdc}
  .end{position:absolute;left:1354px;top:81px}
`, `<slot></slot><nx-caret class="end"></nx-caret>`);

define("rb-group", `
  :host{display:flex;flex-direction:column;flex:none;box-sizing:border-box;position:relative;height:93px}
  .sepbar{position:absolute;right:0;top:5px;bottom:4px;width:1px;background:#d8d8d8}
  .body{display:flex;align-items:flex-start;flex:none;height:75px}
  .cap{flex:none;height:16px;line-height:16px;text-align:center;color:#1686a8;font-size:11px;margin-right:21px;margin-left:21px}
  nx-caret{position:absolute;right:8px;top:81px}
`, `<div class="body"><slot></slot></div><div class="cap"></div><div class="sepbar"></div><nx-caret></nx-caret>`,
  (el, root) => {
    el.style.width = el.getAttribute("w") + "px";
    root.querySelector(".body").style.paddingLeft = el.getAttribute("pad") + "px";
    root.querySelector(".cap").textContent = el.getAttribute("label") || "";
    if (el.hasAttribute("plain")) root.querySelector("nx-caret").remove();
  });

define("rb-big", `
  :host{display:flex;flex-direction:column;align-items:center;flex:none;padding-top:3px;text-align:center;line-height:16px;font-size:11px;white-space:nowrap}
  :host([dim]){color:#b9b9b9}
  #i{display:flex;align-items:center;justify-content:center;height:34px;margin-bottom:3px}
`, `<div id="i"></div><div><slot></slot></div>`,
  (el, root) => {
    el.style.width = el.getAttribute("w") + "px";
    root.getElementById("i").innerHTML = `<nx-ico n="${el.getAttribute("ico")}" s="31"></nx-ico>`;
  });

define("rb-col", `
  :host{display:flex;flex-direction:column;flex:none}
  :host([tall]){padding-top:2px}
`, `<slot></slot>`, (el) => { if (el.hasAttribute("w")) el.style.width = el.getAttribute("w") + "px"; });

define("rb-small", `
  :host{display:flex;align-items:center;gap:4px;box-sizing:border-box;height:22px;padding-left:6px;white-space:nowrap;font-size:11px}
  :host([hl]){margin-top:1px;margin-bottom:-1px;height:21px;background:#cfe5ec;border:1px solid #aed6e0;padding-left:5px;width:49px}
  :host([big]){height:34px;padding-left:0;gap:4px}
`, `<span id="i" style="display:flex"></span><slot></slot>`,
  (el, root) => {
    const big = el.hasAttribute("big");
    root.getElementById("i").innerHTML = `<nx-ico n="${el.getAttribute("ico")}" s="${big ? 24 : 15}"></nx-ico>`;
  });

define("rb-more", `
  :host{display:flex;flex-direction:column;align-items:center;flex:none;width:38px;padding-top:3px;font-size:11px;line-height:16px}
  .box{display:flex;align-items:center;justify-content:center;box-sizing:border-box;width:38px;height:35px;border:1px solid #dedede;border-radius:4px;margin-bottom:2px}
  nx-caret{margin-top:5px}
`, `<div class="box" id="i"></div><slot></slot><nx-caret></nx-caret>`,
  (el, root) => { root.getElementById("i").innerHTML = `<nx-ico n="${el.getAttribute("ico")}" s="15"></nx-ico>`; });

// SELECTION BAR

define("nx-selbar", `
  :host{display:flex;align-items:center;flex:none;box-sizing:border-box;height:32px;padding-bottom:1px;background:#fff;border-bottom:1px solid #a6a6a6;font-size:11px;color:#333}
`, `<slot></slot>`);

define("sel-drop", `
  :host{display:flex;align-items:center;justify-content:space-between;box-sizing:border-box;flex:none;height:21px;border:1px solid #9c9c9c;padding:0 6px 0 2px;font-size:11px;color:#333;white-space:nowrap}
  nx-caret{border-width:4px;border-top-width:4.5px}
`, `<span><slot></slot></span><nx-caret></nx-caret>`, (el) => { el.style.width = el.getAttribute("w") + "px"; });

define("sel-btn", `
  :host{display:flex;align-items:center;justify-content:center;box-sizing:border-box;flex:none;width:23px;height:23px}
  :host([hl]){background:#cde5ec;border:1px solid #aad6e0}
`, `<span id="i" style="display:flex"></span>`,
  (el, root) => { root.getElementById("i").innerHTML = `<nx-ico n="${el.getAttribute("n")}" s="16"></nx-ico>`; });

// MAIN AREA

define("nx-main", `:host{display:flex;flex:1;min-height:0}`, `<slot></slot>`);
define("nx-work", `:host{display:flex;flex-direction:column;flex:none;width:1078px}`, `<slot></slot>`);

define("nx-doctab", `
  :host{display:flex;flex:none;height:24px;box-sizing:border-box;border-bottom:3px solid #569fb9;background:#fff}
  .t{display:flex;align-items:center;box-sizing:border-box;width:124px;height:21px;padding-left:7px;background:#569fb9;color:#fff;font-size:12px;white-space:nowrap}
  .x{margin-left:7px;font:700 13px/21px "Liberation Sans",sans-serif}
  .n{margin-left:5px}
`, `<div class="t"><nx-ico n="model" s="14"></nx-ico><span class="n"><slot></slot></span><span class="x">✕</span></div>`);

const TOOTH = `fill="#ffc000" stroke="#3a3226" stroke-width=".5"`;
const RIM = `stroke="#d95f57" stroke-width="2.6" stroke-linejoin="round"`;

const SCENE = `
<svg width="1078" height="503" viewBox="0 204 1078 503">
<defs>
  <linearGradient id="bg" gradientUnits="userSpaceOnUse" x1="0" y1="204" x2="0" y2="707"><stop offset="0" stop-color="#b7b8ba"/><stop offset="1" stop-color="#e7e8ea"/></linearGradient>
  <linearGradient id="wall" gradientUnits="userSpaceOnUse" x1="330" y1="0" x2="900" y2="0"><stop offset="0" stop-color="#c27a00"/><stop offset=".5" stop-color="#b97400"/><stop offset=".8" stop-color="#a56800"/><stop offset="1" stop-color="#b87400"/></linearGradient>
  <linearGradient id="band" gradientUnits="userSpaceOnUse" x1="330" y1="0" x2="900" y2="0"><stop offset="0" stop-color="#a86a00"/><stop offset=".5" stop-color="#c27a00"/><stop offset="1" stop-color="#d08200"/></linearGradient>
  <linearGradient id="rb" x1="0" y1="0" x2="0" y2="1"><stop offset="0" stop-color="#6f2a26"/><stop offset=".5" stop-color="#bb4f48"/><stop offset="1" stop-color="#ff6f68"/></linearGradient>
  <linearGradient id="rd" x1="0" y1="0" x2="0" y2="1"><stop offset="0" stop-color="#5a2320"/><stop offset=".7" stop-color="#b84c46"/><stop offset="1" stop-color="#d85a53"/></linearGradient>
  <radialGradient id="rf" cx=".5" cy=".85" r=".85"><stop offset="0" stop-color="#ff7a72"/><stop offset=".55" stop-color="#ee615a"/><stop offset="1" stop-color="#722c28"/></radialGradient>
</defs>
<rect x="0" y="204" width="1078" height="503" fill="url(#bg)"/>

<!-- base ring -->
<path d="M330,460 A286,122 0 0 0 902,460 L902,430 L330,430 Z" fill="url(#band)"/>
<path d="M330,460 A286,122 0 0 0 902,460" fill="none" stroke="#3a3226" stroke-width=".8"/>
<ellipse cx="616" cy="460" rx="270" ry="102" fill="#7c4d00"/>

<!-- back wall with scallops -->
<path d="M370,372 L378,325 L425,322 Q432,340 433,350 C445,375 455,383 470,383 C485,383 497,365 500,343 L530,340 C538,355 552,367 570,367 C590,367 606,340 612,316 L613,291 L633,291 L633,320 C640,345 660,367 683,367 C698,367 708,355 713,343 L726,299 L744,303 L738,347 Q745,372 788,387 Q795,385 801,367 L820,326 L835,332 L860,412 L880,440 L880,480 L370,480 Z" fill="url(#wall)"/>
<path d="M530,340 C538,355 552,367 570,367 C590,367 606,340 612,316 M633,320 C640,345 660,367 683,367 C698,367 708,355 713,343 M433,350 C445,375 455,383 470,383" fill="none" ${RIM}/>

<!-- hole -->
<path d="M389,458 A233,71 0 0 1 855,458 A233,90 0 0 1 389,458 Z" fill="url(#bg)"/>
<path d="M389,458 A233,71 0 0 1 855,458" fill="none" stroke="#4a3a1c" stroke-width=".6"/>

<!-- left teeth -->
<path d="M329,370 L368,372 L371,406 L333,404 Q327,385 329,370Z" fill="url(#rd)" ${RIM}/>
<path d="M330,368 L338,355 L370,364 L368,372 Z" ${TOOTH}/>
<path d="M340,420 L370,410 L398,470 L392,497 L393,510 L383,513 Q375,510 370,503 Q350,460 340,420Z" fill="#ffbc00"/>
<path d="M331,407 L340,420 L347,470 L356,480 L333,452Z" fill="#cf8300" stroke="#3a3226" stroke-width=".5"/>
<path d="M331,405 L358,403 L370,410 L340,420 Z" ${TOOTH}/>
<path d="M387,478 L402,478 L425,505 L425,529 L393,512 L392,497Z" fill="#7c4d00"/>

<path d="M379,325 L412,330 Q428,345 435,360 Q420,395 407,417 Q397,395 390,370 Q385,345 379,325Z" fill="url(#rd)" ${RIM}/>
<path d="M378,322 L402,312 L425,322 L413,328 Z" ${TOOTH}/>
<path d="M413,328 L425,322 L433,350 L425,345 Z" fill="#f5a800"/>

<path d="M476,291 L500,302 Q506,322 500,343 Q488,368 466,382 Q478,355 485,335 Q484,310 476,291Z" fill="url(#rd)" ${RIM}/>
<path d="M500,302 L520,298 Q518,318 508,332 L530,340 L502,344 Q505,322 500,302Z" fill="#ffc41c"/>
<path d="M475,290 L510,283 L520,298 L500,302 Z" ${TOOTH}/>

<!-- back centre tooth -->
<path d="M604,277 Q612,295 612,317 Q610,330 603,342 Q600,320 606,305Z" fill="#d95f57"/>
<path d="M642,277 Q633,295 633,320 L640,334 Q642,320 635,310Z" fill="#d95f57"/>
<path d="M613,291 L633,291 Q632,315 636,335 L610,335 Q614,315 613,291Z" fill="#ffb80c"/>
<path d="M603,276 L642,276 L633,291 L613,291 Z" ${TOOTH}/>
<path d="M604,276 L641,276" stroke="#d95f57" stroke-width="1.5"/>

<!-- right back teeth -->
<path d="M770,293 C760,310 757,330 763,355 Q770,375 788,385 L770,386 Q745,372 737,345 Q735,320 744,303 Z" fill="url(#rb)" ${RIM}/>
<path d="M726,299 L744,303 Q735,322 737,347 L713,343 Q725,322 726,299Z" fill="#ffbe14"/>
<path d="M735,285 L770,292 L744,303 L726,299 Q735,292 735,285Z" ${TOOTH}/>

<path d="M868,328 L835,333 Q822,360 823,397 Q828,418 845,420 Q852,410 855,393 Q860,360 868,328Z" fill="url(#rb)" ${RIM}/>
<path d="M820,326 L835,332 L818,373 L801,367 Q815,345 820,326Z" fill="#f59b00"/>
<path d="M820,326 Q832,322 843,315 L868,327 L835,332 Z" ${TOOTH}/>

<path d="M855,402 L877,365 L883,373 L860,412Z" fill="#d58a00"/>
<path d="M883,373 L919,375 L915,413 L881,412 L863,437 Q857,420 860,412 Z" fill="url(#rd)" ${RIM}/>
<path d="M877,365 L910,359 L920,372 L883,373 Z" ${TOOTH}/>

<path d="M877,418 L915,424 Q917,445 914,453 Q895,480 880,508 Q872,518 860,518 Q857,512 860,505 Q860,490 872,458 L853,451 Z" fill="url(#rb)" ${RIM}/>
<path d="M915,423 L920,413 L918,450 L914,455Z" fill="#ffb000"/>
<path d="M882,410 L920,413 L915,424 L877,417 Z" ${TOOTH}/>

<!-- front right -->
<path d="M826,458 C815,470 805,485 803,487 C795,510 785,525 765,527 C764,535 765,545 770,552 C785,553 800,548 827,530 C840,510 850,495 855,487 C855,480 853,472 850,467 Z" fill="url(#rf)" ${RIM}/>
<path d="M850,467 L872,457 L868,492 L855,498 Q857,480 850,467Z" fill="#d58500"/>
<path d="M822,457 L838,450 L872,457 L850,467 Z" ${TOOTH}/>

<path d="M732,483 C728,505 715,527 700,537 C688,545 668,545 655,537 C650,533 645,525 643,517 C639,525 638,535 639,542 C642,552 650,560 660,565 C675,572 700,572 723,556 C732,548 742,535 747,523 C748,515 745,505 740,495 Z" fill="url(#rf)" ${RIM}/>
<path d="M740,495 L776,489 L768,523 L748,525 Q748,510 740,495Z" fill="#d58500"/>
<path d="M732,482 L753,478 L777,489 L740,495 Z" ${TOOTH}/>

<!-- front centre -->
<path d="M617,535 L642,535 L653,562 L602,562Z" fill="#6f4400"/>
<path d="M613,503 L648,502 L643,517 L642,535 L617,535 L615,513Z" fill="#d58500"/>
<path d="M617,488 L639,488 L648,502 L610,502 Z" ${TOOTH}/>

<!-- front left -->
<path d="M523,481 L527,493 C530,503 534,508 540,513 C548,525 556,533 567,537 C576,542 585,543 593,542 C603,536 610,528 613,520 L617,507 C618,518 618,528 617,537 C616,545 614,552 610,557 C598,566 585,570 573,570 C560,568 550,565 540,560 C530,555 522,548 517,540 C512,533 509,527 508,520 C508,510 514,492 523,481Z" fill="url(#rf)" ${RIM}/>
<path d="M400,470 L440,470 Q450,490 458,505 Q468,520 487,525 Q490,535 488,545 Q468,552 450,547 Q430,535 418,518 Q400,498 400,470Z" fill="#f66a63" ${RIM}/>
<path d="M483,490 L515,493 L508,523 L488,520Z" fill="#b87400"/>
<path d="M487,520 L508,523 L508,530 L490,527Z" fill="#7c4d00"/>
<path d="M481,487 L503,478 L523,480 L515,493 Z" ${TOOTH}/>

<!-- work coordinate system -->
<g fill="none" stroke="#2f2ff0" stroke-width="1">
  <path d="M565,425 L625,415 L655,438 L654,500"/>
  <path d="M565,425 L565,487 L593,510 L654,498"/>
  <path d="M527,493 L618,477"/>
  <path d="M625,415 L625,477" stroke="#8f8ff5"/>
</g>
<path d="M625,477 L625,415 M625,410 L625,362" stroke="#1010e0" stroke-width="1.4"/>
<path d="M625,355 L628,369 L622,369 Z" fill="#1010e0"/>
<path d="M625,477 L678,520" stroke="#1010e0" stroke-width="1.2"/>
<path d="M684,525 L673,520 L678,514 Z" fill="#1010e0"/>
<path d="M616,477 H634 M625,469 V486" stroke="#0a0ad8" stroke-width="2.4"/>
<path d="M505,498 L518,495 L527,493" stroke="#eee" stroke-width="1.4"/>
<path d="M610,506 L650,502" stroke="#ccc" stroke-width="1"/>
<text x="625" y="352" text-anchor="middle" font-family="Liberation Sans" font-size="13" fill="#2424e0">Z</text>
<text x="687" y="532" text-anchor="middle" font-family="Liberation Sans" font-size="13" fill="#2424e0">Y</text>
<text x="498" y="504" text-anchor="middle" font-family="Liberation Sans" font-size="13" fill="#eee">X</text>

<!-- view triad -->
<g>
  <path d="M30,643 L46,640 L54,646 L54,664 L38,666 L30,660Z" fill="#cfcfd2" stroke="#b4b4b6" stroke-width="1"/>
  <path d="M30,643 L38,650 L54,646 M38,650 V666" fill="none" stroke="#b4b4b6"/>
  <path d="M46,634 V656" stroke="#93a6e8" stroke-width="2"/>
  <path d="M46,631 L48,639 L44,639Z" fill="#1c3ed8"/>
  <path d="M46,657 L30,660" stroke="#e8a0a0" stroke-width="2"/>
  <path d="M20,661 L29,659 L29,662Z" fill="#d81c1c"/>
  <path d="M46,657 L55,663" stroke="#96cc96" stroke-width="1.6"/>
  <path d="M60,668 L54,662 L57,662Z" fill="#178a17" stroke="#178a17" stroke-width="2"/>
  <text x="46" y="630" text-anchor="middle" font-family="Liberation Sans" font-size="12" fill="#4d6ef0">Z</text>
  <text x="14" y="667" text-anchor="middle" font-family="Liberation Sans" font-size="12" fill="#d84040">X</text>
  <text x="62" y="673" text-anchor="middle" font-family="Liberation Sans" font-size="12" fill="#30a030">Y</text>
</g>
</svg>`;

define("nx-viewport", `
  :host{display:block;position:relative;flex:1;min-height:0;overflow:hidden;background:#ccc}
  svg{display:block}
`, SCENE + `<slot></slot>`);

define("nx-popup", `
  :host{display:flex;flex-direction:column;position:absolute;left:347px;top:145px;box-sizing:border-box;width:192px;height:130px;padding:7px 0;background:rgba(255,255,255,.87);border-radius:3px;box-shadow:0 1px 3px rgba(0,0,0,.08)}
`, `<slot></slot>`);

define("pop-item", `
  :host{display:flex;align-items:center;flex:1;position:relative;padding-left:42px;font-size:12px;word-spacing:2.5px;color:#333;white-space:nowrap}
  svg{position:absolute;left:16px;top:8px}
`, `<slot></slot>`, (el, root) => {
  if (el.hasAttribute("checked")) root.innerHTML += `<svg width="16" height="13" viewBox="0 0 16 13"><path d="M1 7l4 5L15 1" fill="none" stroke="#777" stroke-width="1.2"/></svg>`;
});

define("nx-tip", `
  :host{display:flex;align-items:center;gap:5px;position:absolute;left:441px;top:321px;box-sizing:border-box;width:125px;height:23px;padding-left:3px;background:rgba(228,228,228,.55);border:1px solid #aaa;box-shadow:2px 2px 3px rgba(0,0,0,.25);font-size:12px;color:#444;white-space:nowrap}
`, `<nx-ico n="tpat" s="15"></nx-ico><slot></slot>`);

// NAVIGATOR

define("nx-panel", `
  :host{display:flex;flex-direction:column;flex:none;box-sizing:border-box;width:256px;padding:0 6px 6px 9px;border-left:1px solid #a6a6a6;background:#fff}
  .head{display:flex;align-items:center;flex:none;height:28px;padding-left:3px;gap:11px;font-size:12px;color:#333}
`, `<div class="head"><nx-ico n="frame" s="13"></nx-ico>部件导航器</div><slot></slot>`);

define("nx-tree", `
  :host{display:flex;flex-direction:column;flex:none;box-sizing:border-box;height:419px;border:1px solid #d4d4d4;border-bottom:0;margin-bottom:0}
  .th{display:flex;flex:none;height:22px;box-sizing:border-box;border-bottom:1px solid #ddd;font-size:12px;line-height:21px;color:#333}
  .name{flex:none;width:200px;padding-left:7px;box-sizing:border-box;display:flex;align-items:center;gap:16px}
  .tri{width:0;height:0;border:5px solid transparent;border-bottom:5px solid #222;border-top:0}
  .last{flex:1;border-left:1px solid #ddd;padding-left:6px}
  .rows{flex:1;min-height:0;overflow:hidden}
  .hs{display:flex;align-items:center;justify-content:space-between;flex:none;height:16px;margin-bottom:2px;background:#f0f0f0;padding:0 5px}
  .thumb{flex:none;width:119px;height:16px;background:#c9c9c9;margin-left:6px;margin-right:auto}
  .split{flex:none;height:4px;box-sizing:border-box;border:1px solid #a8a8a8;background:#dcdcdc;margin:0 -1px}
`, `<div class="th"><div class="name">名称 <span class="tri"></span></div><div class="last">最新</div></div>
  <div class="rows"><slot></slot></div>
  <div class="hs"><svg width="8" height="10" viewBox="0 0 8 10"><path d="M6 1L2 5l4 4" fill="none" stroke="#555" stroke-width="2"/></svg><div class="thumb"></div><svg width="8" height="10" viewBox="0 0 8 10"><path d="M2 1l4 4-4 4" fill="none" stroke="#555" stroke-width="2"/></svg></div>
  <div class="split"></div>`);

define("tree-row", `
  :host{display:flex;box-sizing:border-box;height:20px;border-bottom:1px solid #ececec;font-size:12px;line-height:19px;word-spacing:2px;color:#333;white-space:nowrap}
  :host(:nth-child(even)){background:#f8f8f8}
  .a{display:flex;align-items:center;flex:none;width:200px;box-sizing:border-box}
  .b{display:flex;align-items:center;flex:1;padding-left:6px;border-left:1px solid #ececec;background:#fff}
  :host(:nth-child(even)) .b{background:#f8f8f8}
  .s{display:flex;align-items:center;align-self:stretch;flex:1}
  :host([sel]) .s{background:#c1dfe6;font-weight:700;word-spacing:3px}
  :host([sel]) .b{background:#c1dfe6}
  svg.g{display:block;flex:none}
`, `<div class="a"></div><div class="b"></div>`, (el, root) => {
  const kind = el.getAttribute("kind");
  const a = root.querySelector(".a"), b = root.querySelector(".b");
  if (!kind) return;
  const exp = el.getAttribute("exp");
  const box = (x, sign) => `<rect x="${x}" y="6.5" width="7" height="7" fill="#fff" stroke="#bbb"/><path d="M${x + 2} 10h3${sign === "+" ? `M${x + 3.5} 8.5v3` : ""}" stroke="#222"/>`;
  const dots = `stroke="#999" stroke-dasharray="1 1"`;
  let html = "";
  if (kind === "root") {
    const y2 = el.hasAttribute("endroot") ? 7 : 20;
    html += `<svg class="g" width="19" height="19"><path d="M10.5 0V${y2}M14 10h5" ${dots} fill="none"/>${box(7, exp)}</svg>`;
    if (el.hasAttribute("tick")) html += `<nx-ico n="check" s="13" style="margin:0 3px 0 4px"></nx-ico>`;
    html += `<nx-ico n="${el.getAttribute("ico")}" s="17"></nx-ico><div class="s" style="padding-left:3px"><slot></slot></div>`;
  } else {
    const y2 = exp ? 10 : 20;
    html += `<svg class="g" width="41" height="19"><path d="M29.5 0V${y2}M${exp ? 33 : 30} 10H41" ${dots} fill="none"/>${exp ? box(26, exp) : ""}</svg>`;
    html += `<nx-ico n="box" s="12"></nx-ico><nx-ico n="${el.getAttribute("ico")}" s="15" style="margin-left:2px"></nx-ico><div class="s" style="padding-left:4px"><slot></slot></div>`;
  }
  a.innerHTML = html;
  if (el.hasAttribute("ok")) b.innerHTML = `<nx-ico n="check" s="13"></nx-ico>`;
});

define("acc-item", `
  :host{display:flex;align-items:center;justify-content:space-between;flex:none;box-sizing:border-box;height:24px;padding:3px 4px 0 7px;border-bottom:2px solid #cfcfcf;font-size:14px;color:#0f7a9c}
`, `<slot></slot><svg width="12" height="10" viewBox="0 0 12 10"><path d="M1 1l5 7 5-7" fill="none" stroke="#0f6a88" stroke-width="2"/></svg>`);

define("nx-rail", `
  :host{display:flex;flex-direction:column;position:relative;flex:none;box-sizing:border-box;width:32px;border-left:1px solid #a6a6a6;background:#dadada}
`, `<slot></slot>`);

define("rail-item", `
  :host{display:flex;align-items:center;justify-content:center;flex:none;padding-right:2px}
  :host([active]){background:#fff;margin-right:2px;padding-right:0;box-shadow:0 0 0 .5px #bbb}
`, `<span id="i" style="display:flex"></span>`, (el, root) => {
  el.style.height = el.getAttribute("h") + "px";
  root.getElementById("i").innerHTML = `<nx-ico n="${el.getAttribute("n")}" s="${el.getAttribute("s")}"></nx-ico>`;
});

define("rail-pill", `
  :host{display:block;position:absolute;left:21px;top:403px;width:8px;height:57px;border-radius:4px;background:linear-gradient(#565656 0 62%,transparent 62%),repeating-linear-gradient(#3fae55 0 2px,#8cd69c 2px 3px)}
`, ``);

// STATUS

define("nx-status", `
  :host{display:flex;align-items:center;flex:none;box-sizing:border-box;height:22px;background:#fff;border-top:1px solid #b5b5b5;font-size:11px;font-weight:500;word-spacing:2px;color:#222;white-space:nowrap}
  .m{flex:none;width:629px;padding-left:3px;box-sizing:border-box}
  .r{margin-left:auto;display:flex;gap:4px;margin-right:55px}
`, `<div class="m"></div><div class="c"></div><div class="r"><nx-ico n="flag" s="16"></nx-ico><nx-ico n="maximize" s="16"></nx-ico></div>`,
  (el, root) => {
    root.querySelector(".m").textContent = el.getAttribute("msg");
    root.querySelector(".c").textContent = el.getAttribute("sel");
  });

define("nx-taskbar", `
  :host{display:block;flex:none;position:relative;height:8px;overflow:hidden;background:#0a1722}
  .b{position:absolute;left:294px;top:0;width:48px;height:8px;background:#3a4650}
  .t{position:absolute;left:1262px;top:4px;font:11px/14px ${cjk};color:#fff}
`, `<div class="b"></div><div class="t">10:40</div>`);

define("nx-mark", `:host{display:block;position:absolute;left:1083px;top:648px;width:72px;height:75px;pointer-events:none;mix-blend-mode:multiply}svg{display:block}`,
  `<svg width="72" height="75" viewBox="0 0 72 75">
    <path d="M36 0L72 19V56L36 75L0 56V19Z" fill="#8ed2f8" fill-opacity=".75"/>
    <path d="M36 0L72 19V34L48 16L16 28Z" fill="#dff2fd" fill-opacity=".7"/>
    <path d="M0 19L16 28V62L0 56Z" fill="#a9def9" fill-opacity=".6"/>
    <path d="M18 36L38 26L54 36V56L36 64L18 56Z" fill="#74c6f5" fill-opacity=".7"/>
    <path d="M18 36L36 46L54 36M36 46V64" fill="none" stroke="#e8f7ff" stroke-width="1.5"/>
  </svg>`);
</script>
</body>
</html>
